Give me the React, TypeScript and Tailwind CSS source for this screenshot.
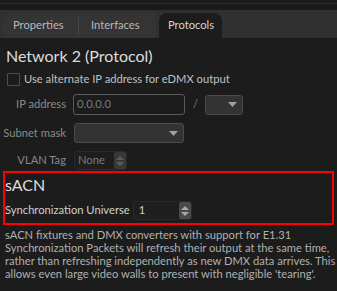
import React from "react";

function SpinArrows({ dim }: { dim?: boolean }) {
  const c = dim ? "#5c5c5c" : "#a8a8a8";
  return (
    <div className={`w-[12px] h-[17px] rounded-[2px] flex flex-col items-center justify-center gap-[2px] ${dim ? "bg-[#383838]" : "bg-[#4a4a4a]"}`}>
      <svg width="8" height="4" viewBox="0 0 8 4"><path d="M0 4 L4 0 L8 4 Z" fill={c} /></svg>
      <svg width="8" height="4" viewBox="0 0 8 4"><path d="M0 0 L4 4 L8 0 Z" fill={c} /></svg>
    </div>
  );
}

function Drop({ cls }: { cls: string }) {
  return (
    <div className={`h-[20px] rounded-[3px] border border-[#4a4a4a] bg-[#333333] flex items-center justify-end pr-[5px] ${cls}`}>
      <svg width="9" height="5" viewBox="0 0 9 5"><path d="M0 0 L9 0 L4.5 5 Z" fill="#a0a0a0" /></svg>
    </div>
  );
}

export default function App() {
  return (
    <div className="w-[337px] h-[291px] bg-[#1c1c1c] overflow-hidden font-[Lato,sans-serif] text-[11.2px]">
      <div className="h-[10px] bg-[#1a1a1a] pt-[3px]">
        <div className="h-[1px] bg-[#2e2e2e]" />
      </div>
      <div className="h-[28px] bg-[#303030] flex items-end">
        <div className="ml-[3px] h-[25px] w-[153px] bg-[#343434] rounded-tl-[8px] flex items-center text-[#b8b8b8]">
          <span className="pl-[10px] w-[75px]">Properties</span>
          <span className="w-[1px] h-[18px] bg-[#474747]" />
          <span className="pl-[12px]">Interfaces</span>
        </div>
        <div className="ml-[3px] h-[25px] w-[63px] bg-[#1c1c1c] rounded-t-[8px] flex items-center pl-[9px] text-[#d4d4d4]">
          Protocols
        </div>
      </div>
      <div className="px-[6px] pt-[8px]">
        <div className="text-[16px] leading-[20px] text-[#dcdcdc]">Network 2 (Protocol)</div>
        <div className="flex items-center mt-[6px] h-[14px]">
          <div className="ml-[1px] w-[13px] h-[13px] border border-[#4e4e4e] rounded-[1px]" />
          <span className="ml-[4px] text-[#c0c0c0]">Use alternate IP address for eDMX output</span>
        </div>
        <div className="flex items-center mt-[8px] h-[21px]">
          <span className="w-[60px] flex justify-end whitespace-nowrap text-[#8a8a8a]">IP address</span>
          <div className="ml-[7px] w-[112px] h-[21px] rounded-[3px] border border-[#5a5a5a] bg-[#1c1c1c] flex items-center pl-[3px] text-[#7a7a7a]">0.0.0.0</div>
          <span className="ml-[8px] text-[#7a7a7a]">/</span>
          <Drop cls="ml-[7px] w-[38px]" />
        </div>
        <div className="flex items-center mt-[8px] h-[20px]">
          <span className="w-[60px] flex justify-end whitespace-nowrap text-[#8a8a8a]">Subnet mask</span>
          <Drop cls="ml-[8px] w-[110px]" />
        </div>
        <div className="flex items-center mt-[8px] h-[19px]">
          <span className="w-[60px] flex justify-end whitespace-nowrap text-[#8a8a8a]">VLAN Tag</span>
          <div className="ml-[8px] w-[53px] h-[19px] rounded-[3px] border border-[#2a2a2a] bg-[#1e1e1e] flex items-center justify-between pl-[3px]">
            <span className="text-[#7a7a7a]">None</span>
            <SpinArrows dim />
          </div>
        </div>
      </div>
      <div className="ml-[3px] mt-[1px] w-[331px] h-[54px] border-2 border-[#ff0000]">
        <div className="mt-[2px] text-[16px] leading-[20px] text-[#dcdcdc]">sACN</div>
        <div className="flex items-center mt-[6px] h-[19px]">
          <span className="text-[#d0d0d0]">Synchronization Universe</span>
          <div className="ml-[3px] w-[59px] h-[19px] rounded-[3px] border border-[#2a2a2a] bg-[#1e1e1e] flex items-center justify-between pl-[5px]">
            <span className="text-[#d0d0d0]">1</span>
            <SpinArrows />
          </div>
        </div>
      </div>
      <div className="pl-[5px] pr-[0px] mt-[3px] leading-[13px] text-[#b0b0b0]">
        sACN fixtures and DMX converters with support for E1.31 Synchronization Packets will refresh their output at the same time, rather than refreshing independently as new DMX data arrives. This allows even large video walls to present with negligible 'tearing'.
      </div>
    </div>
  );
}
